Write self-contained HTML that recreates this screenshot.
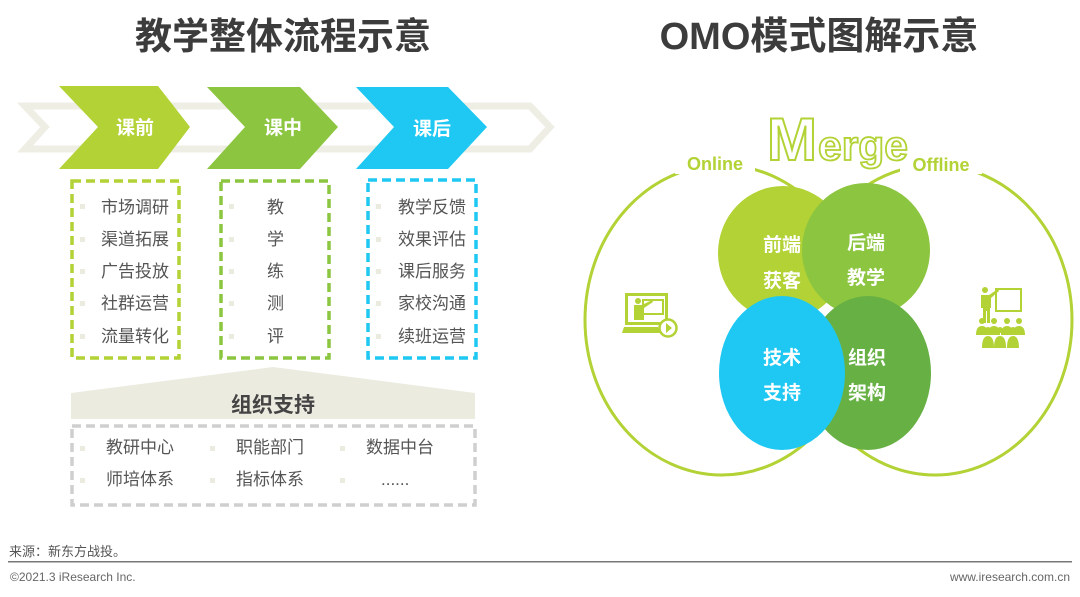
<!DOCTYPE html>
<html><head><meta charset="utf-8"><style>
body{margin:0;width:1080px;height:597px;background:#fff;overflow:hidden;font-family:"Liberation Sans","Noto Sans CJK SC",sans-serif}
svg{display:block}
</style></head><body>
<svg width="1080" height="597" viewBox="0 0 1080 597" font-family="Liberation Sans, Noto Sans CJK SC, sans-serif">
<text x="283" y="49" text-anchor="middle" font-size="37" font-weight="bold" fill="#3c3c3c">教学整体流程示意</text>
<text x="819" y="49" text-anchor="middle" font-size="38" font-weight="bold" fill="#3c3c3c">OMO模式图解示意</text>

<path d="M25,106 L530,106 L550,127 L530,149 L25,149 L45,127 Z" fill="none" stroke="#efeee5" stroke-width="7"/>
<path d="M59,86 L158,86 L190,127 L158,169 L59,169 L98,127 Z" fill="#b2d235"/>
<path d="M207,87 L300,87 L338,127 L300,169 L207,169 L245,127 Z" fill="#8cc540"/>
<path d="M356,87 L448,87 L487,127 L448,169 L356,169 L394,127 Z" fill="#1fc8f2"/>
<g font-size="19" font-weight="bold" fill="#fff" text-anchor="middle">
<text x="135" y="134">课前</text><text x="283" y="134">课中</text><text x="432" y="135">课后</text></g>

<g fill="none" stroke-width="3.5" stroke-dasharray="9,5">
<rect x="72" y="181" width="107" height="177" stroke="#b2d235"/>
<rect x="221" y="181" width="108" height="177" stroke="#8cc540"/>
<rect x="368" y="180" width="108" height="178" stroke="#1fc8f2"/>
</g>
<g fill="#ecebe0">
<rect x="80" y="204" width="5" height="5"/><rect x="80" y="237" width="5" height="5"/><rect x="80" y="269" width="5" height="5"/><rect x="80" y="301" width="5" height="5"/><rect x="80" y="334" width="5" height="5"/>
<rect x="229" y="204" width="5" height="5"/><rect x="229" y="237" width="5" height="5"/><rect x="229" y="269" width="5" height="5"/><rect x="229" y="301" width="5" height="5"/><rect x="229" y="334" width="5" height="5"/>
<rect x="376" y="204" width="5" height="5"/><rect x="376" y="237" width="5" height="5"/><rect x="376" y="269" width="5" height="5"/><rect x="376" y="301" width="5" height="5"/><rect x="376" y="334" width="5" height="5"/>
</g>
<g font-size="17" fill="#555">
<text x="101" y="213">市场调研</text><text x="101" y="245">渠道拓展</text><text x="101" y="277">广告投放</text><text x="101" y="309">社群运营</text><text x="101" y="342">流量转化</text>
<text x="267" y="213">教</text><text x="267" y="245">学</text><text x="267" y="277">练</text><text x="267" y="309">测</text><text x="267" y="342">评</text>
<text x="398" y="213">教学反馈</text><text x="398" y="245">效果评估</text><text x="398" y="277">课后服务</text><text x="398" y="309">家校沟通</text><text x="398" y="342">续班运营</text>
</g>

<path d="M71,393 L273,367 L475,393 L475,419 L71,419 Z" fill="#ecebe0"/>
<text x="273" y="412" text-anchor="middle" font-size="21" font-weight="bold" fill="#444">组织支持</text>
<rect x="72" y="426" width="403" height="79" fill="none" stroke="#cfcfcf" stroke-width="3.5" stroke-dasharray="9,5"/>
<g fill="#ecebe0"><rect x="80" y="446" width="5" height="5"/><rect x="210" y="446" width="5" height="5"/><rect x="340" y="446" width="5" height="5"/>
<rect x="80" y="478" width="5" height="5"/><rect x="210" y="478" width="5" height="5"/><rect x="340" y="478" width="5" height="5"/></g>
<g font-size="17" fill="#555">
<text x="106" y="453">教研中心</text><text x="236" y="453">职能部门</text><text x="366" y="453">数据中台</text>
<text x="106" y="485">师培体系</text><text x="236" y="485">指标体系</text><text x="381" y="485">......</text></g>

<ellipse cx="722" cy="320" rx="137" ry="155" fill="none" stroke="#b2d235" stroke-width="3"/>
<ellipse cx="935" cy="320" rx="137" ry="155" fill="none" stroke="#b2d235" stroke-width="3"/>
<rect x="675" y="146" width="80" height="28" fill="#fff"/>
<rect x="900" y="146" width="82" height="28" fill="#fff"/>
<text x="715" y="170" text-anchor="middle" font-size="18" font-weight="bold" fill="#b2d235">Online</text>
<text x="941" y="171" text-anchor="middle" font-size="18" font-weight="bold" fill="#b2d235">Offline</text>
<text x="767" y="160" font-size="60" font-weight="bold" fill="#fff" stroke="#b2d235" stroke-width="2">M</text>
<text x="818" y="160" font-size="42" font-weight="bold" fill="#fff" stroke="#b2d235" stroke-width="1.8" textLength="90" lengthAdjust="spacingAndGlyphs">erge</text>

<ellipse cx="783" cy="253" rx="65" ry="67" fill="#b2d235"/>
<ellipse cx="866" cy="250" rx="64" ry="67" fill="#8cc540"/>
<ellipse cx="868" cy="373" rx="63" ry="77" fill="#67b044"/>
<ellipse cx="782" cy="373" rx="63" ry="77" fill="#1fc8f2"/>
<g font-size="19" font-weight="bold" fill="#fff" text-anchor="middle">
<text x="782" y="251">前端</text><text x="782" y="287">获客</text>
<text x="866" y="249">后端</text><text x="866" y="284">教学</text>
<text x="782" y="364">技术</text><text x="782" y="399">支持</text>
<text x="867" y="364">组织</text><text x="867" y="399">架构</text></g>

<g fill="#b2d235">
<path d="M625,293 h43 v32 h-43 z M628,296 v26 h37 v-26 z" fill-rule="evenodd"/>
<rect x="643" y="300" width="20" height="14" fill="none" stroke="#b2d235" stroke-width="2"/>
<circle cx="638" cy="301" r="3"/>
<path d="M634,305 h8 l10,-5 1,2 -9,6 v12 h-10 z"/>
<path d="M624,327 h34 l2,6 h-38 z"/>
<circle cx="668" cy="328" r="8.5" fill="#fff" stroke="#b2d235" stroke-width="2.5"/>
<path d="M666,323 l6,5 -6,5 z"/>
</g>
<g fill="#b2d235">
<rect x="996" y="289" width="25" height="22" fill="none" stroke="#b2d235" stroke-width="2"/>
<circle cx="985" cy="290" r="3"/>
<path d="M981,295 h8 l9,-6 1,2 -8,7 v10 h-1 v15 h-3 v-12 h-1 v12 h-3 v-15 h-2 z"/>
<circle cx="982" cy="321" r="3"/><circle cx="994" cy="321" r="3"/><circle cx="1007" cy="321" r="3"/><circle cx="1019" cy="321" r="3"/>
<path d="M976,335 q0,-9 6,-9 q6,0 6,9 z M988,335 q0,-9 6,-9 q6,0 6,9 z M1001,335 q0,-9 6,-9 q6,0 6,9 z M1013,335 q0,-9 6,-9 q6,0 6,9 z"/>
<circle cx="988" cy="330" r="3"/><circle cx="1000" cy="330" r="3"/><circle cx="1013" cy="330" r="3"/>
<path d="M982,348 q0,-12 6,-12 q6,0 6,12 z M994,348 q0,-12 6,-12 q6,0 6,12 z M1007,348 q0,-12 6,-12 q6,0 6,12 z"/>
</g>

<text x="9" y="556" font-size="13" fill="#555">来源：新东方战投。</text>
<rect x="8" y="561" width="1064" height="1.5" fill="#777"/>
<text x="10" y="581" font-size="12" fill="#666">©2021.3 iResearch Inc.</text>
<text x="1070" y="581" text-anchor="end" font-size="12" fill="#666">www.iresearch.com.cn</text>
</svg>
</body></html>
